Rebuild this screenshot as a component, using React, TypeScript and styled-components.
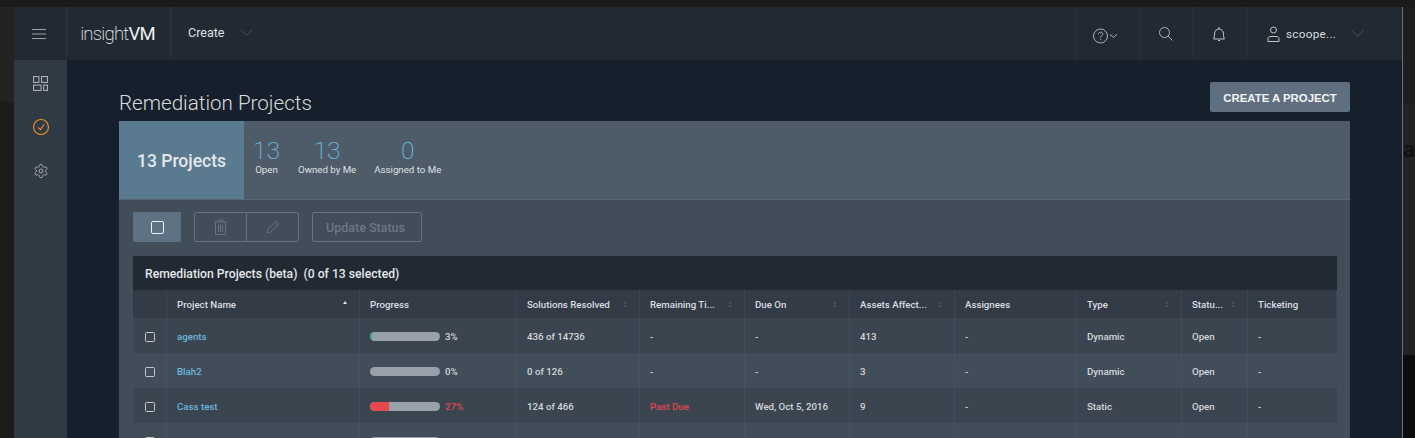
import React from "react";
import styled, { createGlobalStyle } from "styled-components";

const Global = createGlobalStyle`
  html, body {
    margin: 0;
    padding: 0;
    height: 438px;
    overflow: hidden;
    background: #1b1b1b;
  }
  * { box-sizing: border-box; }
`;

const Backdrop = styled.div`
  position: relative;
  width: 1415px;
  height: 438px;
  overflow: hidden;
  padding: 7px 12px 0 14px;
  background:
    linear-gradient(#1a1a1a, #1a1a1a) 0 0 / 100% 7px no-repeat,
    linear-gradient(#232323, #232323) 0 0 / 14px 102px no-repeat,
    linear-gradient(#1e1e1e, #1e1e1e) 100% 0 / 13px 104px no-repeat,
    linear-gradient(#232323, #232323) 100% 104px / 13px 251px no-repeat,
    linear-gradient(#0c0c0c, #0c0c0c) 100% 100% / 13px 83px no-repeat,
    #1c1c1c;
  font-family: Roboto, "Liberation Sans", sans-serif;
`;

const BehindGlyph = styled.span`
  position: absolute;
  left: 1403px;
  top: 136px;
  font-size: 22px;
  line-height: 28px;
  font-weight: 700;
  color: #111;
`;

const Frame = styled.div`
  width: 1389px;
  height: 431px;
  border-right: 1px solid #6b7278;
  display: flex;
  flex-direction: column;
  overflow: hidden;
  background: #15202c;
`;

const TopBar = styled.header`
  height: 53px;
  flex: none;
  display: flex;
  align-items: stretch;
  background: #212933;
  color: #d8dcdf;
`;

const TopCell = styled.div<{ $w?: number; $low?: boolean }>`
  width: ${(p) => (p.$w ? `${p.$w}px` : "auto")};
  flex: none;
  display: flex;
  align-items: center;
  justify-content: center;
  padding: ${(p) => (p.$low ? "4px 3px 0 0" : "0 2px 0 0")};
  border-right: 1px solid #2a323c;
`;

const UserCell = styled.div`
  width: 155px;
  flex: none;
  display: flex;
  align-items: center;
  padding-left: 20px;
`;

const Logo = styled.div`
  font-size: 18.5px;
  font-weight: 200;
  letter-spacing: -0.75px;
  color: #eef0f2;
  b {
    font-weight: 400;
  }
`;

const CreateCell = styled.div`
  flex: 1;
  display: flex;
  align-items: center;
  gap: 16px;
  padding: 0 0 2px 17px;
  font-size: 12.5px;
  color: #dfe2e5;
  border-left: 1px solid #2a323c;
  margin-left: -1px;
  border-right: 1px solid #2a323c;
`;

const UserName = styled.span`
  font-size: 11.7px;
  letter-spacing: 0.3px;
  color: #d8dcdf;
  margin: 0 15px 0 6px;
`;

const Body = styled.div`
  flex: 1;
  display: flex;
  min-height: 0;
`;

const Rail = styled.nav`
  width: 53px;
  flex: none;
  display: flex;
  flex-direction: column;
  align-items: center;
  gap: 28px;
  padding-top: 16px;
  background: #303a45;
  color: #aab0b6;
`;

const Main = styled.main`
  flex: 1;
  min-width: 0;
  padding: 22px 52px 0 52px;
`;

const TitleRow = styled.div`
  height: 39px;
  display: flex;
  justify-content: space-between;
  align-items: flex-start;
`;

const Title = styled.h1`
  margin: 8px 0 0;
  font-size: 20.6px;
  line-height: 26px;
  font-weight: 300;
  color: #d9dcdf;
`;

const CreateButton = styled.button`
  width: 140px;
  height: 30px;
  padding: 1px 0 0;
  border: 0;
  border-radius: 2px;
  background: #5f6f80;
  color: #f2f4f5;
  font-family: "Liberation Sans", Arial, sans-serif;
  font-size: 11.4px;
  font-weight: 700;
`;

const Panel = styled.section`
  width: 1231px;
  background: #414d59;
`;

const Summary = styled.div`
  height: 79px;
  display: flex;
  background: #4e5b68;
  border-bottom: 1px solid #5a6672;
`;

const SummaryLead = styled.div`
  width: 125px;
  display: flex;
  align-items: center;
  justify-content: center;
  padding-top: 1px;
  background: #5a7a90;
  color: #e6e9eb;
  font-size: 17.5px;
  font-weight: 500;
`;

const Stats = styled.div`
  display: flex;
  gap: 18px;
  padding: 17px 0 0 9px;
`;

const Stat = styled.div`
  min-width: 25px;
  display: flex;
  flex-direction: column;
  align-items: center;
`;

const StatValue = styled.div`
  font-size: 24.5px;
  line-height: 26px;
  font-weight: 200;
  color: #6cb8dc;
`;

const StatLabel = styled.div`
  font-size: 9.7px;
  line-height: 11px;
  color: #dfe3e6;
`;

const Toolbar = styled.div`
  height: 56px;
  display: flex;
  align-items: flex-start;
  gap: 13px;
  padding: 12px 0 0 14px;
`;

const SelectButton = styled.div`
  width: 48px;
  height: 30px;
  display: flex;
  align-items: center;
  justify-content: center;
  border-radius: 2px;
  background: #5f7283;
`;

const BigCheck = styled.span`
  width: 13px;
  height: 13px;
  border: 1.5px solid #eef0f2;
  border-radius: 2px;
`;

const ToolGroup = styled.div`
  width: 105px;
  height: 30px;
  display: flex;
  border: 1px solid #67727d;
  border-radius: 2px;
`;

const ToolCell = styled.div`
  flex: 1;
  display: flex;
  align-items: center;
  justify-content: center;
  color: #66717c;
  & + & {
    border-left: 1px solid #67727d;
  }
`;

const StatusButton = styled.div`
  width: 110px;
  height: 30px;
  display: flex;
  align-items: center;
  justify-content: center;
  padding: 1px 3px 0 0;
  border: 1px solid #67727d;
  border-radius: 2px;
  color: #6d7883;
  font-size: 12.5px;
  font-weight: 500;
`;

const TableWrap = styled.div`
  margin: 0 13px 0 14px;
`;

const TableTitle = styled.div`
  height: 34px;
  display: flex;
  align-items: center;
  padding: 1px 0 0 12px;
  background: #212933;
  color: #e4e7e9;
  font-size: 12.2px;
  font-weight: 500;
`;

const Grid = styled.div`
  display: grid;
  grid-template-columns: 34px 193px 157px 123px 105px 105px 105px 122px 105px 66px 89px;
`;

const HeadCell = styled.div`
  height: 28px;
  display: flex;
  align-items: center;
  justify-content: space-between;
  padding: 0 12px 0 10px;
  background: #323b46;
  border-right: 1px solid #3b4550;
  color: #dadee1;
  font-size: 9.7px;
  font-weight: 500;
  white-space: nowrap;
`;

const SortMark = styled.span<{ $on?: boolean }>`
  width: 4px;
  height: 9px;
  display: flex;
  flex-direction: column;
  justify-content: center;
  gap: 1px;
  &::before,
  &::after {
    content: "";
    border-left: 2px solid transparent;
    border-right: 2px solid transparent;
  }
  &::before {
    border-bottom: 3px solid ${(p) => (p.$on ? "#e4e7e9" : "#46505b")};
  }
  &::after {
    border-top: 3px solid ${(p) => (p.$on ? "transparent" : "#46505b")};
  }
`;

const Cell = styled.div<{ $odd: boolean; $red?: boolean; $link?: boolean }>`
  height: 35px;
  display: flex;
  align-items: center;
  gap: 5px;
  padding: 2px 0 0 10px;
  background: ${(p) => (p.$odd ? "#3a4550" : "#414d59")};
  border-right: 1px solid ${(p) => (p.$odd ? "#414d59" : "#46525e")};
  color: ${(p) => (p.$red ? "#e0474e" : p.$link ? "#6cb6da" : "#d3d7db")};
  font-size: 9.7px;
  font-weight: 500;
  white-space: nowrap;
  &:nth-child(11n) {
    border-right: 0;
  }
`;

const CheckCell = styled(Cell)`
  padding-left: 12px;
`;

const RowCheck = styled.span`
  width: 10px;
  height: 10px;
  border: 1px solid #c3c8cc;
  border-radius: 1.5px;
`;

const Bar = styled.div`
  width: 70px;
  height: 9px;
  border-radius: 5px;
  overflow: hidden;
  background: #98a1a9;
`;

const BarFill = styled.div<{ $color: string }>`
  height: 100%;
  background: ${(p) => p.$color};
`;

const Menu = () => (
  <svg width="14" height="10" viewBox="0 0 14 10" fill="none" stroke="#9aa1a7" strokeWidth="1">
    <path d="M0 .5h14M0 5h14M0 9.5h14" />
  </svg>
);

const Chevron = ({ w = 13, color = "#4a535d" }: { w?: number; color?: string }) => (
  <svg width={w} height={w / 2} viewBox="0 0 14 7" fill="none" stroke={color} strokeWidth="1">
    <path d="M.5.5 7 6.5 13.5.5" />
  </svg>
);

const Help = () => (
  <svg width="26" height="16" viewBox="0 0 26 16" fill="none" stroke="#aeb3b8" strokeWidth="1">
    <circle cx="7.5" cy="8" r="7" />
    <path d="M5.4 6.2c.2-2.7 4.4-2.7 4.400-.1 0 1.700-2.300 1.700-2.300 3.600M7.500 11v1.100" />
    <path d="M17 6.500l3.500 3 3.500-3" />
  </svg>
);

const Search = () => (
  <svg width="14" height="14" viewBox="0 0 14 14" fill="none" stroke="#aeb3b8" strokeWidth="1">
    <circle cx="5.500" cy="5.500" r="5" />
    <path d="M9 9l4.500 4.500" />
  </svg>
);

const Bell = () => (
  <svg width="14" height="16" viewBox="0 0 14 16" fill="none" stroke="#c2c6ca" strokeWidth="1">
    <path d="M1.500 13c.7-1 1-2.500 1-5 0-3 1.800-5 4.500-5s4.500 2 4.500 5c0 2.500.3 4 1 5zM7 3V1M6 14.500h2" />
  </svg>
);

const User = () => (
  <svg width="13" height="16" viewBox="0 0 13 16" fill="none" stroke="#c2c6ca" strokeWidth="1">
    <circle cx="6.500" cy="4" r="3" />
    <path d="M1 15.500v-3c0-1 1-2 2-2h7c1 0 2 1 2 2v3z" />
  </svg>
);

const Dashboard = () => (
  <svg width="15" height="15" viewBox="0 0 14 14" fill="none" stroke="#aab0b6" strokeWidth="1">
    <rect x=".5" y=".5" width="5" height="5.500" />
    <rect x="8" y=".5" width="5.500" height="5.500" />
    <rect x=".5" y="8.500" width="7" height="5" />
    <rect x="10" y="8.500" width="3.500" height="5" />
  </svg>
);

const Check = () => (
  <svg width="16" height="16" viewBox="0 0 15 15" fill="none" stroke="#d98a2b" strokeWidth="1.100">
    <circle cx="7.500" cy="7.500" r="7" />
    <path d="M5 8l2 2 3.500-5" />
  </svg>
);

const Gear = () => (
  <svg width="16" height="16" viewBox="0 0 24 24" fill="none" stroke="#aab0b6" strokeWidth="1.500">
    <path d="M12.220 2h-.44a2 2 0 0 0-2 2v.18a2 2 0 0 1-1 1.730l-.43.250a2 2 0 0 1-2 0l-.15-.080a2 2 0 0 0-2.730.730l-.220.380a2 2 0 0 0 .730 2.730l.150.100a2 2 0 0 1 1 1.720v.510a2 2 0 0 1-1 1.740l-.150.090a2 2 0 0 0-.730 2.730l.220.380a2 2 0 0 0 2.730.730l.150-.080a2 2 0 0 1 2 0l.430.250a2 2 0 0 1 1 1.730V20a2 2 0 0 0 2 2h.440a2 2 0 0 0 2-2v-.180a2 2 0 0 1 1-1.730l.430-.250a2 2 0 0 1 2 0l.150.080a2 2 0 0 0 2.730-.730l.220-.390a2 2 0 0 0-.730-2.730l-.150-.080a2 2 0 0 1-1-1.740v-.500a2 2 0 0 1 1-1.740l.150-.090a2 2 0 0 0 .730-2.730l-.220-.380a2 2 0 0 0-2.730-.730l-.150.080a2 2 0 0 1-2 0l-.430-.250a2 2 0 0 1-1-1.730V4a2 2 0 0 0-2-2z" />
    <circle cx="12" cy="12" r="3" />
  </svg>
);

const Trash = () => (
  <svg width="13" height="16" viewBox="0 0 13 16" fill="none" stroke="currentColor" strokeWidth="1">
    <path d="M0 3h13M4 3V1h5v2M1.500 3v12.500h10V3M4.500 5.500v7.500M6.500 5.500v7.500M8.500 5.500v7.500" />
  </svg>
);

const Pencil = () => (
  <svg width="14" height="14" viewBox="0 0 14 14" fill="none" stroke="currentColor" strokeWidth="1">
    <path d="M1 13l1-4L10 1l3 3-8 8zM8.500 2.500l3 3" />
  </svg>
);

type Row = {
  name: string;
  pct: number;
  color: string;
  red?: boolean;
  solved: string;
  left: string;
  due: string;
  assets: string;
  type: string;
};

const rows: Row[] = [
  { name: "agents", pct: 3, color: "#1fb58f", solved: "436 of 14736", left: "-", due: "-", assets: "413", type: "Dynamic" },
  { name: "Blah2", pct: 0, color: "#98a1a9", solved: "0 of 126", left: "-", due: "-", assets: "3", type: "Dynamic" },
  { name: "Cass test", pct: 27, color: "#e5484d", red: true, solved: "124 of 466", left: "Past Due", due: "Wed, Oct 5, 2016", assets: "9", type: "Static" },
  { name: "chicago test", pct: 0, color: "#98a1a9", solved: "0 of 174", left: "Past Due", due: "Fri, Feb 10, 2017", assets: "1", type: "Static" },
];

const heads = [
  { label: "" },
  { label: "Project Name", on: true, sort: true },
  { label: "Progress" },
  { label: "Solutions Resolved", sort: true },
  { label: "Remaining Ti...", sort: true },
  { label: "Due On", sort: true },
  { label: "Assets Affect...", sort: true },
  { label: "Assignees" },
  { label: "Type", sort: true },
  { label: "Statu...", sort: true },
  { label: "Ticketing" },
];

export default function App() {
  return (
    <Backdrop>
      <Global />
      <BehindGlyph>a</BehindGlyph>
      <Frame>
        <TopBar>
          <TopCell $w={53}>
            <Menu />
          </TopCell>
          <TopCell $w={104}>
            <Logo>
              insight<b>VM</b>
            </Logo>
          </TopCell>
          <CreateCell>
            Create <Chevron />
          </CreateCell>
          <TopCell $w={64} $low>
            <Help />
          </TopCell>
          <TopCell $w={54}>
            <Search />
          </TopCell>
          <TopCell $w={53}>
            <Bell />
          </TopCell>
          <UserCell>
            <User />
            <UserName>scoope...</UserName>
            <Chevron />
          </UserCell>
        </TopBar>
        <Body>
          <Rail>
            <Dashboard />
            <Check />
            <Gear />
          </Rail>
          <Main>
            <TitleRow>
              <Title>Remediation Projects</Title>
              <CreateButton>CREATE A PROJECT</CreateButton>
            </TitleRow>
            <Panel>
              <Summary>
                <SummaryLead>13 Projects</SummaryLead>
                <Stats>
                  <Stat>
                    <StatValue>13</StatValue>
                    <StatLabel>Open</StatLabel>
                  </Stat>
                  <Stat>
                    <StatValue>13</StatValue>
                    <StatLabel>Owned by Me</StatLabel>
                  </Stat>
                  <Stat>
                    <StatValue>0</StatValue>
                    <StatLabel>Assigned to Me</StatLabel>
                  </Stat>
                </Stats>
              </Summary>
              <Toolbar>
                <SelectButton>
                  <BigCheck />
                </SelectButton>
                <ToolGroup>
                  <ToolCell>
                    <Trash />
                  </ToolCell>
                  <ToolCell>
                    <Pencil />
                  </ToolCell>
                </ToolGroup>
                <StatusButton>Update Status</StatusButton>
              </Toolbar>
              <TableWrap>
                <TableTitle>Remediation Projects (beta)&nbsp;&nbsp;(0 of 13 selected)</TableTitle>
                <Grid>
                  {heads.map((h, i) => (
                    <HeadCell key={i}>
                      {h.label}
                      {h.sort && <SortMark $on={h.on} />}
                    </HeadCell>
                  ))}
                  {rows.map((r, i) => {
                    const odd = i % 2 === 0;
                    return (
                      <React.Fragment key={r.name}>
                        <CheckCell $odd={odd}>
                          <RowCheck />
                        </CheckCell>
                        <Cell $odd={odd} $link>
                          {r.name}
                        </Cell>
                        <Cell $odd={odd} $red={r.red}>
                          <Bar>
                            <BarFill $color={r.color} style={{ width: `${r.pct}%` }} />
                          </Bar>
                          {r.pct}%
                        </Cell>
                        <Cell $odd={odd}>{r.solved}</Cell>
                        <Cell $odd={odd} $red={r.left !== "-"}>
                          {r.left}
                        </Cell>
                        <Cell $odd={odd}>{r.due}</Cell>
                        <Cell $odd={odd}>{r.assets}</Cell>
                        <Cell $odd={odd}>-</Cell>
                        <Cell $odd={odd}>{r.type}</Cell>
                        <Cell $odd={odd}>Open</Cell>
                        <Cell $odd={odd}>-</Cell>
                      </React.Fragment>
                    );
                  })}
                </Grid>
              </TableWrap>
            </Panel>
          </Main>
        </Body>
      </Frame>
    </Backdrop>
  );
}
